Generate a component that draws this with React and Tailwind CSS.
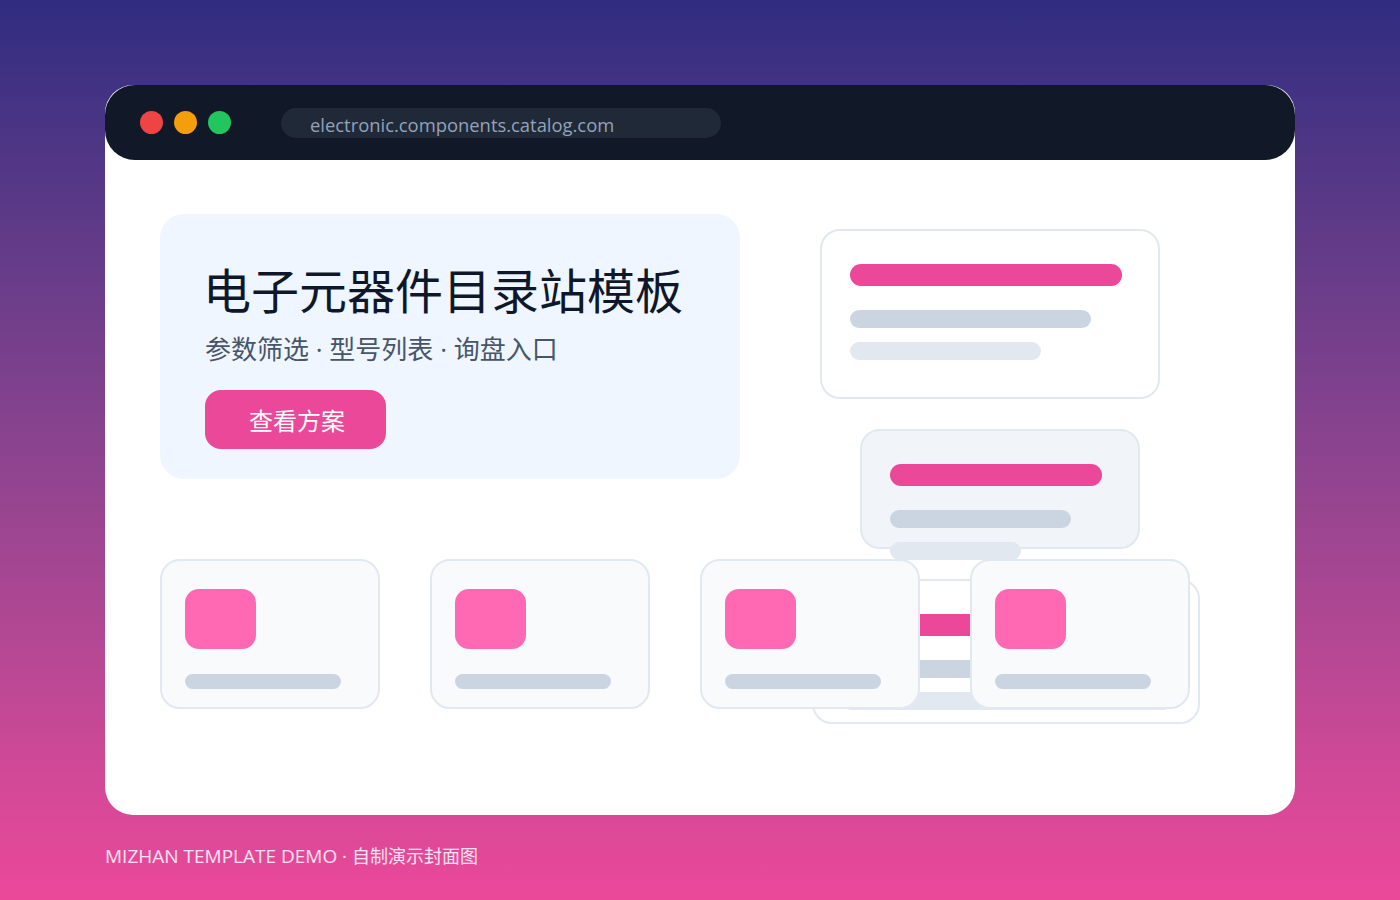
const cjk = { fontFamily: '"Noto Sans CJK SC", "Noto Sans", sans-serif' }
const latin = { fontFamily: '"Open Sans", "Noto Sans", sans-serif' }

function Bars({ pink, gray, light }) {
  return (
    <div className="flex flex-col pl-[28px] pt-[33px]">
      <div className="h-[22px] rounded-full bg-[#ec4899]" style={{ width: pink }} />
      <div className="mt-[24px] h-[18px] rounded-full bg-[#cbd5e1]" style={{ width: gray }} />
      <div className="mt-[14px] h-[18px] rounded-full bg-[#e2e8f0]" style={{ width: light }} />
    </div>
  )
}

function ProductCard() {
  return (
    <div className="relative h-[150px] w-[220px] rounded-[20px] border-2 border-[#e2e8f0] bg-[#f8fafc] pl-[23px] pt-[28px]">
      <div className="h-[60px] w-[71px] rounded-[14px] bg-[#ff69b4]" />
      <div className="mt-[25px] h-[15px] w-[156px] rounded-full bg-[#cbd5e1]" />
    </div>
  )
}

function Dot() {
  return <span style={latin}> · </span>
}

export default function App() {
  return (
    <div className="min-h-[900px] w-full bg-gradient-to-b from-[#302c80] to-[#ec4899] pt-[85px] pl-[105px]" style={cjk}>
      {/* browser window */}
      <div className="w-[1190px] h-[730px] rounded-[28px] bg-white flex flex-col">
        <div className="h-[75px] rounded-[30px] bg-[#111827] flex items-center -mb-px relative z-10 pl-[35px]">
          <div className="flex items-center gap-[11px]">
            <span className="h-[23px] w-[23px] rounded-full bg-[#ef4444]" />
            <span className="h-[23px] w-[23px] rounded-full bg-[#f59e0b]" />
            <span className="h-[23px] w-[23px] rounded-full bg-[#22c55e]" />
          </div>
          <div className="ml-[50px] h-[30px] w-[440px] rounded-full bg-[#1f2937] flex items-center pl-[29px] pt-[4px]">
            <span className="text-[18.4px] text-[#94a3b8]" style={latin}>electronic.components.catalog.com</span>
          </div>
        </div>

        <div className="relative flex-1 pl-[55px] pt-[55px]">
          <div className="flex items-start">
            {/* hero */}
            <div className="w-[580px] h-[265px] rounded-[24px] bg-[#eff6ff] pl-[45px] pt-[42px]">
              <h1 className="text-[48px] leading-[64px] text-[#0f172a] -ml-[2px]">电子元器件目录站模板</h1>
              <p className="mt-[9px] text-[26px] leading-[38px] text-[#475569]">
                参数筛选<Dot />型号列表<Dot />询盘入口
              </p>
              <div className="mt-[22px] h-[59px] w-[181px] rounded-[16px] bg-[#ec4899] text-white text-[24px] flex items-center justify-center pl-[3px]">
                查看方案
              </div>
            </div>

            {/* illustration cards */}
            <div className="flex flex-col">
              <div className="ml-[80px] mt-[15px] h-[170px] w-[340px] rounded-[20px] border-2 border-[#e2e8f0] bg-white">
                <Bars pink={272} gray={241} light={191} />
              </div>
              <div className="ml-[120px] mt-[30px] h-[120px] w-[280px] rounded-[20px] border-2 border-[#e2e8f0] bg-[#f1f5f9]">
                <Bars pink={212} gray={181} light={131} />
              </div>
            </div>
          </div>

          {/* card behind the product row */}
          <div className="absolute left-[707px] top-[420px] h-[145px] w-[388px] rounded-[20px] border-2 border-[#e2e8f0] bg-white">
            <Bars pink={300} gray={260} light={330} />
          </div>

          <div className="mt-[10px] flex gap-[50px]">
            <ProductCard />
            <ProductCard />
            <ProductCard />
            <ProductCard />
          </div>
        </div>
      </div>

      <p className="mt-[28px] pb-[30px] text-[18px] leading-[24px] text-white/85">
        <span className="text-[19px]" style={latin}>MIZHAN TEMPLATE DEMO · </span>自制演示封面图
      </p>
    </div>
  )
}
